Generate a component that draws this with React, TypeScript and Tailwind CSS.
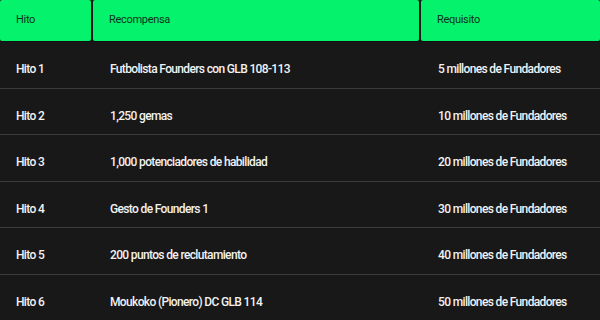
import React from "react";

const rows = [
  ["Hito 1", "Futbolista Founders con GLB 108-113", "5 millones de Fundadores"],
  ["Hito 2", "1,250 gemas", "10 millones de Fundadores"],
  ["Hito 3", "1,000 potenciadores de habilidad", "20 millones de Fundadores"],
  ["Hito 4", "Gesto de Founders 1", "30 millones de Fundadores"],
  ["Hito 5", "200 puntos de reclutamiento", "40 millones de Fundadores"],
  ["Hito 6", "Moukoko (Pionero) DC GLB 114", "50 millones de Fundadores"],
];

export default function App() {
  return (
    <div
      className="w-[600px] h-[320px] overflow-hidden bg-[#181818]"
      style={{ fontFamily: "Roboto, 'Noto Sans', sans-serif" }}
    >
      <div className="grid grid-cols-[91px_326px_1fr] gap-x-[2px] h-[42px] border-b border-[#111]">
        {["Hito", "Recompensa", "Requisito"].map((h) => (
          <div
            key={h}
            className="bg-[#05f26c] rounded-[2px] flex items-center pl-4 text-[11px] tracking-[-0.3px] text-[#0b3320]"
          >
            {h}
          </div>
        ))}
      </div>
      {rows.map((r, i) => (
        <div
          key={i}
          className={`grid grid-cols-[91px_326px_1fr] gap-x-[2px] h-[46.5px] pt-[19px] text-[12px] leading-[16px] font-medium text-[#f2f2f2] tracking-[-0.65px] ${
            i < rows.length - 1 ? "border-b border-[#3c3c3c]" : ""
          }`}
        >
          <div className="pl-4 whitespace-nowrap">{r[0]}</div>
          <div className="pl-[17px] whitespace-nowrap">{r[1]}</div>
          <div className="pl-[17px] whitespace-nowrap">{r[2]}</div>
        </div>
      ))}
    </div>
  );
}
